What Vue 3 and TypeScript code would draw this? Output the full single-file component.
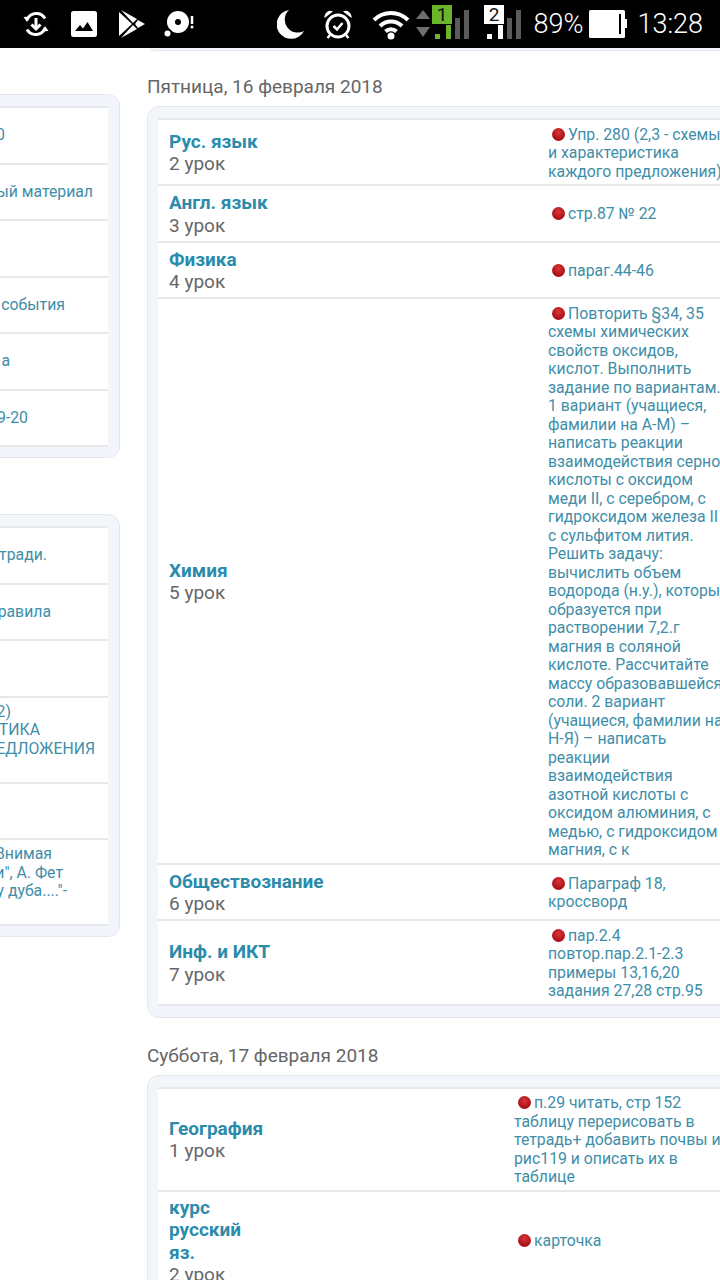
<script setup lang="ts">
type Lesson = { subject: string[]; num: string; lines: string[] }
type Day = { title: string; hwLeft: number; lessons: Lesson[] }
type SideLine = { text: string; end: number }

const sideCards: SideLine[][][] = [
  [
    [{ text: '0', end: 4 }],
    [{ text: 'ый материал', end: 92 }],
    [],
    [{ text: 'события', end: 64 }],
    [{ text: 'а', end: 9 }],
    [{ text: '9-20', end: 27 }],
  ],
  [
    [{ text: 'тради.', end: 46 }],
    [{ text: 'равила', end: 50 }],
    [],
    [
      { text: '2)', end: 10 },
      { text: 'ТИКА', end: 39 },
      { text: 'ЕДЛОЖЕНИЯ', end: 94 },
      { text: '', end: 0 },
    ],
    [],
    [
      { text: 'Внимая', end: 51 },
      { text: 'и", А. Фет', end: 62 },
      { text: 'у дуба...."-', end: 66 },
      { text: '', end: 0 },
    ],
  ],
]

const days: Day[] = [
  {
    title: 'Пятница, 16 февраля 2018',
    hwLeft: 390,
    lessons: [
      { subject: ['Рус. язык'], num: '2 урок', lines: ['Упр. 280 (2,3 - схемы', 'и характеристика', 'каждого предложения)'] },
      { subject: ['Англ. язык'], num: '3 урок', lines: ['стр.87 № 22'] },
      { subject: ['Физика'], num: '4 урок', lines: ['параг.44-46'] },
      {
        subject: ['Химия'],
        num: '5 урок',
        lines: [
          'Повторить §34, 35',
          'схемы химических',
          'свойств оксидов,',
          'кислот. Выполнить',
          'задание по вариантам.',
          '1 вариант (учащиеся,',
          'фамилии на А-М) –',
          'написать реакции',
          'взаимодействия серной',
          'кислоты с оксидом',
          'меди II, с серебром, с',
          'гидроксидом железа II',
          'с сульфитом лития.',
          'Решить задачу:',
          'вычислить объем',
          'водорода (н.у.), который',
          'образуется при',
          'растворении 7,2.г',
          'магния в соляной',
          'кислоте. Рассчитайте',
          'массу образовавшейся',
          'соли. 2 вариант',
          '(учащиеся, фамилии на',
          'Н-Я) – написать',
          'реакции',
          'взаимодействия',
          'азотной кислоты с',
          'оксидом алюминия, с',
          'медью, с гидроксидом',
          'магния, с к',
        ],
      },
      { subject: ['Обществознание'], num: '6 урок', lines: ['Параграф 18,', 'кроссворд'] },
      { subject: ['Инф. и ИКТ'], num: '7 урок', lines: ['пар.2.4', 'повтор.пар.2.1-2.3', 'примеры 13,16,20', 'задания 27,28 стр.95'] },
    ],
  },
  {
    title: 'Суббота, 17 февраля 2018',
    hwLeft: 356,
    lessons: [
      {
        subject: ['География'],
        num: '1 урок',
        lines: ['п.29 читать, стр 152', 'таблицу перерисовать в', 'тетрадь+ добавить почвы и', 'рис119 и описать их в', 'таблице'],
      },
      { subject: ['курс', 'русский', 'яз.'], num: '2 урок', lines: ['карточка'] },
    ],
  },
]
</script>

<template>
  <div class="screen">
    <header class="status">
      <div class="status-left">
        <svg width="26" height="26" viewBox="0 0 26 26" fill="none" stroke="#fff" stroke-width="3">
          <path d="M4 9a10 10 0 0 1 18-1.500" />
          <path d="M22 17a10 10 0 0 1-18 1.500" />
          <path d="M0.500 6 L7 5.500 L4 11 Z M25.500 20 L19 20.500 L22 15 Z" fill="#fff" stroke="none" />
          <path d="M13 7v11" />
          <path d="M8.500 13.500 L13 18 L17.500 13.500" />
        </svg>
        <svg width="26" height="26" viewBox="0 0 26 26">
          <rect width="26" height="26" rx="2.500" fill="#fff" />
          <path d="M4 20 L9 14 L12 17.500 L16.500 11 L22 20 Z" fill="#000" />
        </svg>
        <svg class="play" width="26" height="28" viewBox="0 0 26 28" fill="#fff">
          <path d="M0 2 L13 14 L0 26 Z" />
          <path d="M2 0 L18 9 L14 13 Z" />
          <path d="M2 28 L18 19 L14 15 Z" />
          <path d="M19 10 L26 14 L19 18 L16 14 Z" />
        </svg>
        <svg class="disc" width="30" height="28" viewBox="0 0 30 28">
          <circle cx="14" cy="12" r="11" fill="#fff" />
          <circle cx="14" cy="12" r="3" fill="#000" />
          <circle cx="3.500" cy="23.500" r="5" fill="#000" />
          <circle cx="3.500" cy="23.500" r="3" fill="#fff" />
          <path d="M28 6v8" stroke="#fff" stroke-width="2.500" />
          <circle cx="28" cy="17" r="1.500" fill="#fff" />
        </svg>
      </div>
      <div class="status-right">
        <svg width="27" height="29" viewBox="0 0 27 29">
          <path d="M12 0 A14.500 14.500 0 1 0 27 21 A13 13 0 0 1 12 0 Z" fill="#fff" />
        </svg>
        <svg class="ml20" width="28" height="29" viewBox="0 0 28 29" fill="none" stroke="#fff">
          <circle cx="14" cy="16" r="11" stroke-width="3" />
          <path d="M9.500 16 L13 19.500 L18.500 13" stroke-width="2.500" />
          <path d="M0.500 8 A6 6 0 0 1 9 1.500 Z M27.500 8 A6 6 0 0 0 19 1.500 Z" fill="#fff" stroke="none" />
          <path d="M6 25 L3.500 28 M22 25 L24.500 28" stroke-width="2.500" />
        </svg>
        <svg class="ml20" width="38" height="31" viewBox="0 0 38 31" fill="none" stroke="#fff" stroke-width="4">
          <path d="M2 11 A24 24 0 0 1 36 11" />
          <path d="M8 17 A15.500 15.500 0 0 1 30 17" />
          <path d="M13.500 22.500 A8 8 0 0 1 24.500 22.500" />
          <circle cx="19" cy="27" r="3.500" fill="#fff" stroke="none" />
        </svg>
        <svg class="ml6" width="14" height="28" viewBox="0 0 14 28" fill="#6e6e6e">
          <path d="M7 0 L14 9 L0 9 Z" />
          <path d="M0 17 L14 17 L7 27 Z" />
        </svg>
        <svg class="ml2 sim" width="38" height="34" viewBox="0 0 38 34">
          <rect width="20" height="19" fill="#6ab52b" />
          <text x="10" y="16" class="sim-num" text-anchor="middle">1</text>
          <rect x="3" y="29" width="5" height="5" fill="#6ab52b" />
          <rect x="14" y="20" width="5" height="14" fill="#6ab52b" />
          <rect x="23" y="13" width="5" height="21" fill="#5a5a5a" />
          <rect x="32" y="5" width="5" height="29" fill="#5a5a5a" />
        </svg>
        <svg class="ml14 sim" width="38" height="34" viewBox="0 0 38 34">
          <rect width="20" height="19" fill="#fff" />
          <text x="10" y="16" class="sim-num" text-anchor="middle">2</text>
          <rect x="3" y="29" width="5" height="5" fill="#fff" />
          <rect x="14" y="20" width="5" height="14" fill="#fff" />
          <rect x="23" y="13" width="5" height="21" fill="#5a5a5a" />
          <rect x="32" y="5" width="5" height="29" fill="#5a5a5a" />
        </svg>
        <span class="status-text ml12">89%</span>
        <svg class="ml6" width="38" height="28" viewBox="0 0 38 28">
          <rect width="36" height="28" rx="1.500" fill="#fff" />
          <rect x="30" y="4" width="2" height="20" fill="#000" />
          <rect x="35" y="9" width="3" height="9" fill="#fff" />
        </svg>
        <span class="status-text ml10">13:28</span>
      </div>
    </header>

    <main class="content">
      <aside class="side">
        <section v-for="(card, c) in sideCards" :key="c" class="side-card">
          <div v-for="(row, r) in card" :key="r" class="side-row">
            <div>
              <div
                v-for="(line, l) in row"
                :key="l"
                class="side-line"
                :style="{ width: line.end + 'px' }"
              >
                <span>{{ line.text }}</span>
              </div>
            </div>
          </div>
        </section>
      </aside>

      <div class="diary">
        <div class="prev-card"></div>
        <section v-for="day in days" :key="day.title" class="day">
          <h2 class="day-title">{{ day.title }}</h2>
          <div class="day-card">
            <div
              v-for="lesson in day.lessons"
              :key="lesson.num"
              class="lesson"
              :style="{ gridTemplateColumns: day.hwLeft + 'px 1fr' }"
            >
              <div class="lesson-name">
                <a v-for="part in lesson.subject" :key="part" class="subject">{{ part }}</a>
                <span class="num">{{ lesson.num }}</span>
              </div>
              <div class="hw">
                <div v-for="(line, i) in lesson.lines" :key="i" class="hw-line">
                  <i v-if="i === 0" class="ball"></i>{{ line }}
                </div>
              </div>
            </div>
          </div>
        </section>
      </div>
    </main>
  </div>
</template>

<style>
html,
body {
  background: #fff;
}
</style>

<style scoped>
.screen {
  width: 720px;
  height: 1280px;
  overflow: hidden;
  background: #fff;
  font-family: Roboto, "Noto Sans", sans-serif;
}
.status {
  height: 48px;
  background: #000;
  display: flex;
  justify-content: space-between;
  align-items: center;
  padding: 0 17px 0 23px;
  box-sizing: border-box;
}
.status-left {
  display: flex;
  align-items: center;
  gap: 22px;
}
.status-left .disc {
  margin-left: -3px;
}
.status-right {
  display: flex;
  align-items: center;
}
.status-text {
  color: #fff;
  font-size: 27px;
  font-weight: 300;
}
.sim {
  overflow: visible;
  margin-top: -4px;
}
.sim-num {
  font-family: Roboto, sans-serif;
  font-size: 19px;
  fill: #111;
}
.ml2 { margin-left: 2px; }
.ml6 { margin-left: 6px; }
.ml10 { margin-left: 10px; }
.ml12 { margin-left: 12px; }
.ml14 { margin-left: 14px; }
.ml20 { margin-left: 20px; }

.content {
  display: flex;
  align-items: flex-start;
}
.side {
  flex: 0 0 120px;
  padding-top: 46px;
}
.side-card {
  margin-left: -12px;
  background: #f2f6fb;
  border: 1px solid #e3e8ee;
  border-radius: 0 12px 12px 0;
  padding: 11px 11px 10px 0;
  margin-bottom: 56px;
  color: #3f8ea8;
  font-size: 15.8px;
  line-height: 18.5px;
}
.side-row {
  background: #fff;
  border-top: 2px solid #e6e8ea;
  min-height: 56.5px;
  box-sizing: border-box;
  padding: 5px 0 5px 12px;
  display: flex;
  align-items: center;
}
.side-row:last-child {
  border-bottom: 2px solid #e6e8ea;
  min-height: 58.5px;
}
.side-line {
  display: flex;
  justify-content: flex-end;
  white-space: nowrap;
  min-height: 18.5px;
}
.diary {
  flex: 0 0 600px;
  margin-left: 27px;
}
.prev-card {
  height: 2px;
  margin-left: 3px;
  background: #f2f6fb;
  border-bottom: 1px solid #e3e8ee;
  border-radius: 0 0 0 8px;
}
.day-title {
  margin: 0;
  padding: 24px 0 7px;
  font-size: 19px;
  line-height: 24px;
  font-weight: 400;
  color: #666;
}
.day + .day .day-title {
  padding-top: 26px;
}
.day-card {
  background: #f2f6fb;
  border: 1px solid #e3e8ee;
  border-radius: 12px;
  padding: 11px 0 11px 10px;
}
.lesson {
  display: grid;
  align-items: center;
  min-height: 56.5px;
  box-sizing: border-box;
  background: #fff;
  border-top: 2px solid #e6e8ea;
  padding: 5.5px 0 3px;
}
.lesson:last-child {
  border-bottom: 2px solid #e6e8ea;
}
.lesson-name {
  padding-left: 11px;
  display: flex;
  flex-direction: column;
  line-height: 22.3px;
}
.subject {
  font-size: 19px;
  font-weight: 700;
  color: #2b8bab;
}
.num {
  font-size: 19px;
  color: #666;
}
.hw {
  font-size: 15.8px;
  line-height: 18.5px;
  color: #3f8ea8;
  white-space: nowrap;
}
.ball {
  display: inline-block;
  width: 13px;
  height: 13px;
  margin: 0 3px 0 4px;
  border-radius: 50%;
  vertical-align: -1px;
  background: radial-gradient(circle at 50% 35%, #d9363a, #a81016 70%);
}
</style>
